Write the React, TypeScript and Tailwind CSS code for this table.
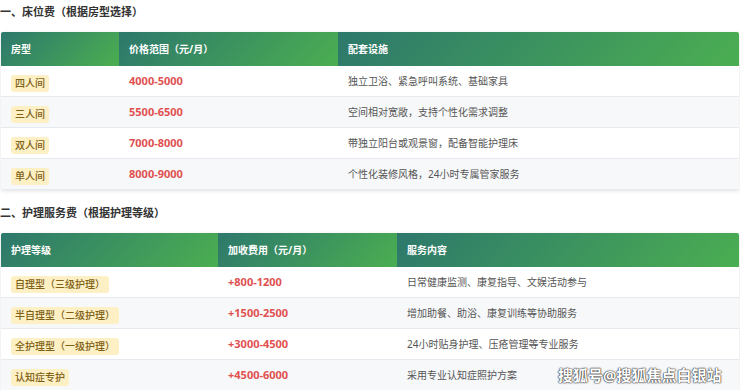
import React from "react";

const font = "font-['Noto_Sans','Noto_Sans_CJK_SC',sans-serif]";

type Row = { badge: string; price: string; desc: string };

const t1: Row[] = [
  { badge: "四人间", price: "4000-5000", desc: "独立卫浴、紧急呼叫系统、基础家具" },
  { badge: "三人间", price: "5500-6500", desc: "空间相对宽敞，支持个性化需求调整" },
  { badge: "双人间", price: "7000-8000", desc: "带独立阳台或观景窗，配备智能护理床" },
  { badge: "单人间", price: "8000-9000", desc: "个性化装修风格，24小时专属管家服务" },
];

const t2: Row[] = [
  { badge: "自理型（三级护理）", price: "+800-1200", desc: "日常健康监测、康复指导、文娱活动参与" },
  { badge: "半自理型（二级护理）", price: "+1500-2500", desc: "增加助餐、助浴、康复训练等协助服务" },
  { badge: "全护理型（一级护理）", price: "+3000-4500", desc: "24小时贴身护理、压疮管理等专业服务" },
  { badge: "认知症专护", price: "+4500-6000", desc: "采用专业认知症照护方案" },
];

const head =
  "h-full flex items-center pl-[10px] text-white font-bold text-[10px] bg-[linear-gradient(135deg,#2d786c_0%,#4bae51_100%)]";

function Table({ heads, rows, w1, w2 }: { heads: string[]; rows: Row[]; w1: string; w2: string }) {
  return (
    <div className="mx-px rounded-[2px] overflow-hidden bg-white shadow-[0_1px_4px_rgba(0,0,0,0.12)]">
      <div className="flex h-[34px]">
        <div className={`${w1} shrink-0 ${head}`}>{heads[0]}</div>
        <div className={`${w2} shrink-0 ${head}`}>{heads[1]}</div>
        <div className={`flex-1 ${head}`}>{heads[2]}</div>
      </div>
      {rows.map((r, i) => (
        <div
          key={i}
          className={`flex h-[31px] items-center border-b border-[#e6e9ed] ${i % 2 === 1 ? "bg-[#f7f8fa]" : "bg-white"}`}
        >
          <div className={`${w1} shrink-0 pl-[10px]`}>
            <span className="inline-block rounded-[3px] bg-[#fdf0c4] px-[4px] py-[1px] text-[10px] leading-[15px] font-medium text-[#7f6116]">
              {r.badge}
            </span>
          </div>
          <div className={`${w2} shrink-0 pl-[10px] text-[11px] font-bold text-[#e05050]`}>{r.price}</div>
          <div className="flex-1 pl-[10px] text-[10px] text-[#555]">{r.desc}</div>
        </div>
      ))}
    </div>
  );
}

export default function App() {
  return (
    <div className={`relative w-[740px] h-[390px] overflow-hidden bg-white ${font}`}>
      <div className="pt-[4px] h-[32px] text-[11px] leading-[16px] font-bold text-[#333]">
        一、床位费（根据房型选择）
      </div>
      <Table
        heads={["房型", "价格范围（元/月）", "配套设施"]}
        rows={t1}
        w1="w-[118px]"
        w2="w-[219px]"
      />
      <div className="pt-[15px] h-[43px] text-[11px] leading-[16px] font-bold text-[#333]">
        二、护理服务费（根据护理等级）
      </div>
      <Table
        heads={["护理等级", "加收费用（元/月）", "服务内容"]}
        rows={t2}
        w1="w-[217px]"
        w2="w-[179px]"
      />
      <div className="absolute left-[558px] top-[365px] text-[15px] leading-[20px] font-bold text-white [text-shadow:0_0_1px_#333,0_0_1px_#333,0_0_2px_#555]">
        搜狐号@搜狐焦点白银站
      </div>
    </div>
  );
}
